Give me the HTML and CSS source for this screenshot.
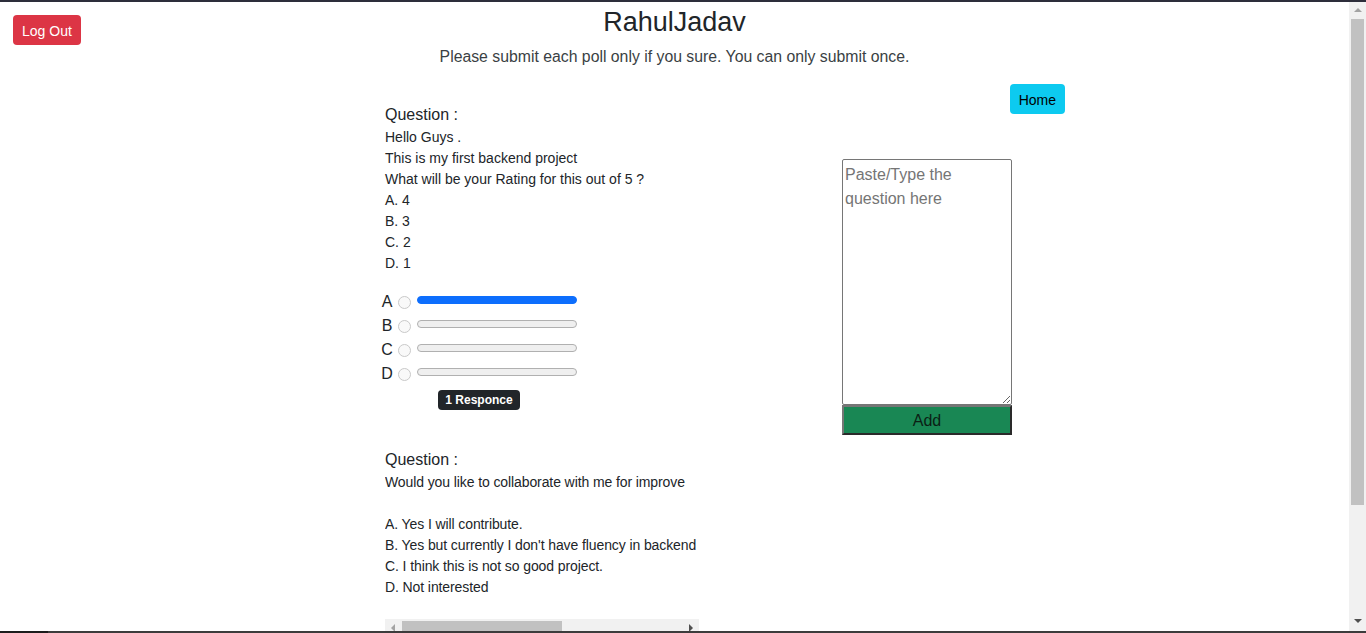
FILE: index.html
```html
<!DOCTYPE html>
<html lang="en">
<head>
<meta charset="utf-8">
<title>RahulJadav Poll</title>
<link rel="stylesheet" href="styles.css">
</head>
<body>
<div class="frame-top"></div>
<div class="page">
  <header class="header">
    <button class="btn btn-logout">Log Out</button>
    <h3 class="title">RahulJadav</h3>
    <p class="subtitle">Please submit each poll only if you sure. You can only submit once.</p>
  </header>
  <main class="main">
    <section class="polls">
      <article class="poll">
        <div class="q-label">Question :</div>
        <div class="q-box">
          <div class="q-text">Hello Guys .
This is my first backend project
What will be your Rating for this out of 5 ?
A. 4
B. 3
C. 2
D. 1</div>
        </div>
        <div class="options">
          <div class="opt"><span class="opt-letter">A</span><span class="radio"></span><span class="bar bar-full"></span></div>
          <div class="opt"><span class="opt-letter">B</span><span class="radio"></span><span class="bar"></span></div>
          <div class="opt"><span class="opt-letter">C</span><span class="radio"></span><span class="bar"></span></div>
          <div class="opt"><span class="opt-letter">D</span><span class="radio"></span><span class="bar"></span></div>
          <span class="badge">1 Responce</span>
        </div>
      </article>
      <article class="poll poll-next">
        <div class="q-label">Question :</div>
        <div class="q-box q-scroll">
          <div class="q-text q-text-pad q-tight">Would you like to collaborate with me for improve

A. Yes I will contribute.
B. Yes but currently I don't have fluency in backend
C. I think this is not so good project.
D. Not interested</div>
          <div class="hscroll">
            <span class="arrow arrow-left"></span>
            <span class="hthumb"></span>
            <span class="arrow arrow-right"></span>
          </div>
        </div>
      </article>
    </section>
    <aside class="side">
      <button class="btn btn-home">Home</button>
      <textarea class="ask" placeholder="Paste/Type the question here"></textarea>
      <button class="btn-add">Add</button>
    </aside>
  </main>
</div>
<div class="vscroll">
  <span class="arrow arrow-up"></span>
  <span class="vthumb"></span>
  <span class="arrow arrow-down"></span>
</div>
<div class="frame-bottom"></div>
</body>
</html>
```
FILE: styles.css
```css
* { box-sizing: border-box; }

html, body {
  margin: 0;
  height: 100%;
  overflow: hidden;
}

body {
  font-family: "Liberation Sans", Arial, sans-serif;
  color: #212529;
  background: #fff;
}

.page {
  width: calc(100% - 17px);
  padding-top: 2px;
}

/* header */
.header {
  display: grid;
  grid-template-columns: 1fr auto 1fr;
  grid-template-rows: auto auto;
}

.btn {
  font-family: inherit;
  border: 0;
  border-radius: 4px;
  height: 30px;
  font-size: 14px;
  line-height: 32px;
  padding: 0 9px;
  cursor: pointer;
}

.btn-logout {
  grid-column: 1;
  grid-row: 1 / 3;
  justify-self: start;
  align-self: start;
  margin: 13px 0 0 13px;
  background: #dc3545;
  color: #fff;
}

.title {
  grid-column: 2;
  grid-row: 1;
  margin: 3px 0 0;
  font-size: 27px;
  line-height: 34px;
  font-weight: 500;
  color: #212529;
}

.subtitle {
  grid-column: 1 / -1;
  grid-row: 2;
  margin: 6px 0 0;
  text-align: center;
  font-size: 15.8px;
  line-height: 24px;
  color: #3a3f44;
}

/* main */
.main {
  display: flex;
  margin: 15px 0 0 385px;
  width: 680px;
}

.polls {
  width: 314px;
  flex: none;
  padding-top: 19px;
}

.q-label {
  font-size: 16px;
  line-height: 24px;
}

.q-text {
  font-size: 14px;
  line-height: 21px;
  white-space: pre;
}

.q-scroll {
  width: 314px;
  overflow: hidden;
}

.q-text-pad {
  padding-bottom: 21px;
}

.q-tight {
  letter-spacing: -0.1px;
}

.options {
  margin: 16px 0 0 -5px;
  width: 198px;
  display: flex;
  flex-direction: column;
}

.opt {
  display: flex;
  align-items: center;
  height: 24px;
}

.opt-letter {
  width: 14px;
  text-align: center;
  font-size: 16px;
  line-height: 24px;
}

.radio {
  width: 13px;
  height: 13px;
  margin-left: 4px;
  border: 1px solid #c9c9c9;
  border-radius: 50%;
  background: #f9f9f9;
}

.bar {
  width: 160px;
  height: 8px;
  margin: 0 0 4px 6px;
  border-radius: 4px;
  border: 1px solid #b0b0b0;
  background: #efefef;
}

.bar-full {
  background: #0d6efd;
  border-color: #0d6efd;
}

.badge {
  align-self: center;
  margin-top: 4px;
  height: 20px;
  padding: 0 7px;
  border-radius: 4px;
  background: #212529;
  color: #fff;
  font-size: 12px;
  font-weight: 700;
  line-height: 20px;
}

.poll-next {
  margin-top: 38px;
}

/* fake horizontal scrollbar of the question box */
.hscroll {
  position: relative;
  height: 17px;
  background: #f1f1f1;
}

.hthumb {
  position: absolute;
  left: 17px;
  top: 2px;
  width: 160px;
  height: 13px;
  background: #c1c1c1;
}

.arrow {
  position: absolute;
  width: 0;
  height: 0;
  border-style: solid;
  border-color: transparent;
}

.arrow-left {
  left: 6px;
  top: 5px;
  border-width: 4px 4px 4px 0;
  border-right-color: #a3a3a3;
}

.arrow-right {
  right: 6px;
  top: 5px;
  border-width: 4px 0 4px 4px;
  border-left-color: #505050;
}

/* right side */
.side {
  flex: 1;
  display: flex;
  flex-direction: column;
  align-items: flex-start;
}

.btn-home {
  align-self: flex-end;
  background: #0dcaf0;
  color: #000;
}

.ask {
  margin: 45px 0 0 143px;
  width: 170px;
  height: 246px;
  padding: 3px 2px 2px;
  border: 1px solid #767676;
  border-radius: 2px;
  font-family: inherit;
  font-size: 16px;
  line-height: 24px;
  color: #212529;
  resize: vertical;
}

.ask::placeholder {
  color: #757575;
}

.btn-add {
  margin-left: 143px;
  width: 170px;
  height: 30px;
  padding: 2px 0 0;
  font-family: inherit;
  font-size: 16px;
  color: #0b1f14;
  background: #198754;
  border-style: solid;
  border-width: 2px;
  border-color: #767676 #2a2a2a #2a2a2a #767676;
}

/* window chrome overlays */
.frame-top {
  position: fixed;
  top: 0;
  left: 0;
  right: 0;
  height: 2px;
  background: #2d2e3b;
  z-index: 3;
}

.frame-bottom {
  position: fixed;
  bottom: 0;
  left: 0;
  right: 0;
  height: 2px;
  background: linear-gradient(to right, #1c1c1c 48px, #3c3c3c 48px);
  z-index: 3;
}

.vscroll {
  position: fixed;
  top: 2px;
  right: 0;
  bottom: 2px;
  width: 17px;
  background: #f1f1f1;
  z-index: 2;
}

.vthumb {
  position: absolute;
  left: 2px;
  top: 17px;
  width: 13px;
  height: 486px;
  background: #c1c1c1;
}

.arrow-up {
  left: 5px;
  top: 6px;
  border-width: 0 4px 4px 4px;
  border-bottom-color: #a3a3a3;
}

.arrow-down {
  left: 5px;
  bottom: 8px;
  border-width: 4px 4px 0 4px;
  border-top-color: #505050;
}
```
